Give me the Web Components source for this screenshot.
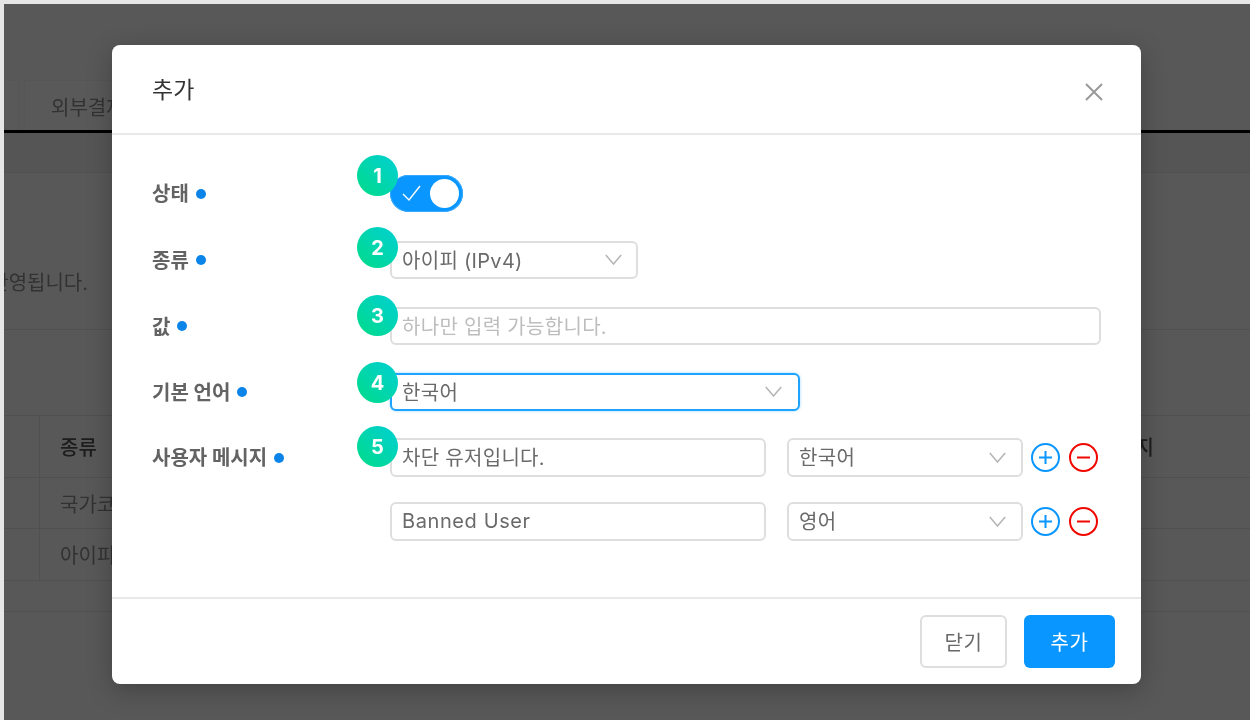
<!DOCTYPE html>
<html lang="ko"><head><meta charset="utf-8"><title>추가</title>
<style>
html,body{margin:0;height:720px;overflow:hidden;background:#e6e6e6}
body{font-family:"Inter","Noto Sans CJK KR",sans-serif}
</style></head><body>
<app-page>
  <bg-page slot="bg"></bg-page>
  <modal-dialog heading="추가">
    <form-row label="상태" step="1" top="-20" h="37" gap="29"><toggle-switch></toggle-switch></form-row>
    <form-row label="종류" step="2" top="-14" h="38" gap="28"><field-box width="248" chevron="1" chev-r="14">아이피 (IPv4)</field-box></form-row>
    <form-row label="값" step="3" top="-12" h="38" gap="28"><field-box grow="1" placeholder="1">하나만 입력 가능합니다.</field-box></form-row>
    <form-row label="기본 언어" step="4" top="-11" h="38" gap="27"><field-box width="410" chevron="1" focused="1" chev-r="16">한국어</field-box></form-row>
    <form-row label="사용자 메시지" step="5" top="-12" h="39" gap="25">
      <field-box width="376">차단 유저입니다.</field-box>
      <field-box width="236" chevron="1" style="margin-left:21px" chev-r="15">한국어</field-box>
      <round-icon kind="plus" style="margin-left:8px"></round-icon>
      <round-icon kind="minus" style="margin-left:9px"></round-icon>
    </form-row>
    <form-row h="39" gap="0">
      <field-box width="376" style="letter-spacing:.6px;padding-bottom:1px">Banned User</field-box>
      <field-box width="236" chevron="1" style="margin-left:21px" chev-r="15">영어</field-box>
      <round-icon kind="plus" style="margin-left:8px"></round-icon>
      <round-icon kind="minus" style="margin-left:9px"></round-icon>
    </form-row>
    <app-button slot="footer">닫기</app-button>
    <app-button slot="footer" primary="1">추가</app-button>
  </modal-dialog>
</app-page>
<script>
function def(name, render){
  customElements.define(name, class extends HTMLElement{
    connectedCallback(){
      if(this.shadowRoot) return;
      const r=this.attachShadow({mode:'open'});
      r.innerHTML=render(this);
    }
  });
}
def('app-page',()=>`<style>
:host{display:block;position:relative;width:1250px;height:720px;overflow:hidden;box-sizing:border-box;padding:4px 0 0 4px;filter:blur(.45px)}
.bg{display:block;height:716px}
.scrim{position:absolute;left:4px;top:4px;right:0;bottom:0;background:rgba(0,0,0,.65)}
::slotted(modal-dialog){position:absolute;left:112px;top:45px}
</style><div class="bg"><slot name="bg"></slot></div><div class="scrim"></div><slot></slot>`);

def('bg-page',()=>`<style>
:host{display:block;background:#fdfdfd;height:716px;overflow:hidden;color:#8f8f8f;font-size:20px}
.tabs{display:flex;gap:5px;margin-top:76px;height:50px;border-bottom:3px solid #000;box-sizing:content-box}
.tab{background:#fff;border:1px solid #f7f7f7;border-bottom:0;box-sizing:border-box;height:50px;display:flex;align-items:center}
.t0{width:15px}.t1{width:130px;padding:2px 0 0 26px;white-space:nowrap;overflow:hidden}
.band{height:39px;background:#f4f4f4;border-bottom:1px solid #e8e8e8}
.note{height:157px;border-bottom:1px solid #e4e4e4;box-sizing:border-box;padding-top:97px}
.note div{width:84px;display:flex;justify-content:flex-end;overflow:hidden;white-space:nowrap;line-height:26px;height:26px}
.note span{flex:none}
.table{margin-top:85px;border-top:1px solid #e4e4e4;border-bottom:1px solid #e4e4e4;display:grid;grid-template-columns:35px 1fr}
.table>div{height:51px;border-bottom:1px solid #e4e4e4;box-sizing:border-box;display:flex;align-items:center}
.table>div:nth-child(2n){border-left:1px solid #e4e4e4;padding-left:20px}
.table>.h{height:62px}
.h.k{color:#555;font-weight:500;justify-content:space-between;padding-right:96px}
.table>.last{border-bottom:0;height:51px}
.foot{height:30px;border-bottom:1px solid #e4e4e4}
</style>
<div class="tabs"><div class="tab t0"></div><div class="tab t1">외부결제</div></div>
<div class="band"></div>
<div class="note"><div><span>반영됩니다.</span></div></div>
<div class="table">
  <div class="h"></div><div class="h k"><span>종류</span><span>메시지</span></div>
  <div></div><div>국가코드</div>
  <div class="last"></div><div class="last">아이피</div>
</div>
<div class="foot"></div>`);

def('modal-dialog',h=>`<style>
:host{display:block;width:1029px;height:639px;background:#fff;border-radius:8px;box-shadow:0 6px 24px rgba(0,0,0,.25);font-size:20px;color:#666;display:flex;flex-direction:column}
header{height:88px;flex:none;border-bottom:2px solid #e9e9e9;display:flex;align-items:center;justify-content:space-between;box-sizing:content-box;padding:0 38px 0 40px}
h1{margin:0 0 2px;font-size:23px;font-weight:400;color:#333}
svg{display:block;margin-top:6px}
main{flex:1;padding:40px 0 0 40px}
footer{height:87px;flex:none;box-sizing:border-box;border-top:2px solid #e9e9e9;padding:16px 26px 16px 0;display:flex;justify-content:flex-end;gap:17px}
</style>
<header><h1>${h.getAttribute('heading')}</h1>
<svg width="18" height="18" viewBox="0 0 18 18" fill="none" stroke="#999" stroke-width="2"><path d="M1 1l16 16M17 1L1 17"/></svg></header>
<main><slot></slot></main>
<footer><slot name="footer"></slot></footer>`);

def('form-row',h=>{
 const l=h.getAttribute('label'), s=h.getAttribute('step');
 return `<style>
:host{display:flex;align-items:center;position:relative;height:${h.getAttribute('h')}px;margin-bottom:${h.getAttribute('gap')}px;width:949px}
.label{width:238px;flex:none;display:flex;align-items:center;gap:7px;font-size:20px;font-weight:700;color:#636363;padding-bottom:2px;box-sizing:border-box}
.dot{width:10px;height:10px;border-radius:50%;background:#0a84e8;margin-top:2px}
.fields{display:flex;align-items:center;flex:1;position:relative;height:100%}
.step{position:absolute;left:-33px;top:${h.getAttribute('top')}px}
</style>
<div class="label">${l?`<span>${l}</span><span class="dot"></span>`:''}</div>
<div class="fields"><slot></slot>${s?`<step-badge class="step">${s}</step-badge>`:''}</div>`});

def('step-badge',()=>`<style>
:host{display:flex;width:41px;height:41px;border-radius:50%;align-items:center;justify-content:center;background:linear-gradient(45deg,#00dc88,#00cfd4);color:#fff;font:700 20px "Inter",sans-serif;box-sizing:border-box;z-index:2}
</style><slot></slot>`);

def('toggle-switch',()=>`<style>
:host{display:block;position:relative;width:73px;height:37px;border-radius:19px;background:#0a96ff;box-shadow:inset 0 0 0 1px #38a9ff}
svg{position:absolute;left:12px;top:10px}
i{position:absolute;right:4px;top:4px;width:29px;height:29px;border-radius:50%;background:#fff}
</style><svg width="19" height="17" viewBox="0 0 19 17" fill="none" stroke="#fff" stroke-width="1.4"><path d="M1 9l6 6L18 1"/></svg><i></i>`);

def('field-box',h=>{
 const w=h.getAttribute('width'), g=h.hasAttribute('grow'), f=h.hasAttribute('focused');
 return `<style>
:host{display:flex;align-items:center;height:100%;box-sizing:border-box;${g?'flex:1;':`width:${w}px;flex:none;`}
 border:2px solid ${f?'#1ea3ff':'#dedede'};border-radius:6px;background:#fff;padding:0 0 2px 10px;position:relative;
 font-size:20px;letter-spacing:.3px;color:${h.hasAttribute('placeholder')?'#bdbdbd':'#6a6a6a'};white-space:nowrap;${f?'box-shadow:0 0 3px rgba(30,163,255,.45);':''}}
svg{position:absolute;right:${h.getAttribute('chev-r')||16}px;top:50%;margin-top:-6px}
</style><slot></slot>${h.hasAttribute('chevron')?'<svg width="17" height="11" viewBox="0 0 17 11" fill="none" stroke="#b4b4b4" stroke-width="1.5"><path d="M.8 1l7.7 9L16.2 1"/></svg>':''}`});

def('round-icon',h=>{
 const plus=h.getAttribute('kind')==='plus', c=plus?'#0a96ff':'#f00800';
 return `<style>:host{display:block;width:29px;height:29px;flex:none}svg{display:block}</style>
<svg width="29" height="29" viewBox="0 0 29 29" fill="none" stroke="${c}" stroke-width="2"><circle cx="14.5" cy="14.5" r="13.5"/><path d="M8 14.5h13${plus?'M14.5 8v13':''}"/></svg>`});

def('app-button',h=>{
 const p=h.hasAttribute('primary');
 return `<style>:host{display:flex;align-items:center;justify-content:center;box-sizing:border-box;height:53px;width:${p?91:87}px;border-radius:6px;font-size:20px;letter-spacing:.5px;
 ${p?'background:#0a96ff;color:#fff;':'background:#fff;border:2px solid #dedede;color:#6a6a6a;'}}</style><slot></slot>`});
</script>
</body></html>
